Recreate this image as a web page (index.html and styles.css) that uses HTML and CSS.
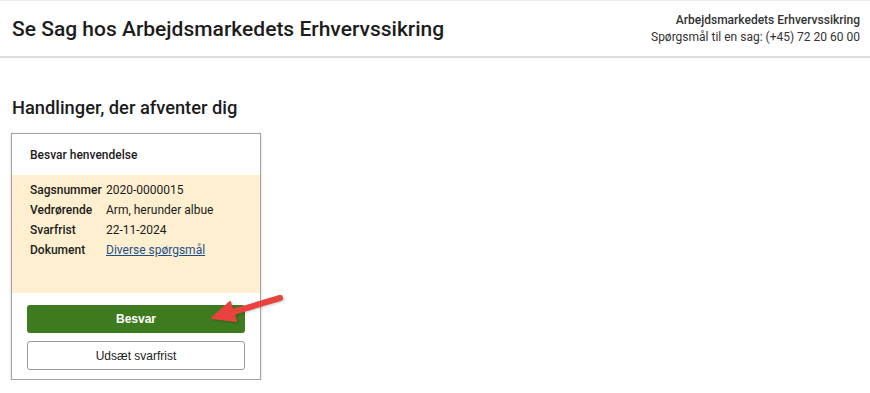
FILE: index.html
```html
<!DOCTYPE html>
<html lang="da">
<head>
  <meta charset="UTF-8" />
  <meta name="viewport" content="width=device-width, initial-scale=1.0" />
  <title>Se Sag hos Arbejdsmarkedets Erhvervssikring</title>
  <link rel="stylesheet" href="styles.css">
</head>
<body>
  <header class="topbar">
    <h1>Se Sag hos Arbejdsmarkedets Erhvervssikring</h1>
    <div class="contact">
      <strong>Arbejdsmarkedets Erhvervssikring</strong>
      <span>Spørgsmål til en sag: (+45) 72 20 60 00</span>
    </div>
  </header>

  <main class="content">
    <h2>Handlinger, der afventer dig</h2>

    <div class="task-wrap">
      <div class="task-card">
        <div class="task-head">Besvar henvendelse</div>
        <dl class="task-details">
          <dt>Sagsnummer</dt><dd>2020-0000015</dd>
          <dt>Vedrørende</dt><dd>Arm, herunder albue</dd>
          <dt>Svarfrist</dt><dd>22-11-2024</dd>
          <dt>Dokument</dt><dd><a href="#">Diverse spørgsmål</a></dd>
        </dl>
        <div class="task-actions">
          <button class="btn btn-primary">Besvar</button>
          <button class="btn btn-secondary">Udsæt svarfrist</button>
        </div>
      </div>

      <!-- markering -->
      <svg class="arrow" width="90" height="45" viewBox="0 0 90 45">
        <line x1="33" y1="26" x2="80" y2="12" stroke="#e8433f" stroke-width="6" stroke-linecap="round" />
        <polygon points="12,32 30,16 36,35" fill="#e8433f" stroke="#e8433f" stroke-width="2" stroke-linejoin="round" />
      </svg>
    </div>
  </main>
</body>
</html>
```

FILE: styles.css
```css
body {
  font-family: Roboto, "Noto Sans", sans-serif;
  margin: 0;
  padding: 0;
  background-color: #fff;
  color: #1c1c1c;
}
.topbar {
  display: flex;
  justify-content: space-between;
  align-items: center;
  height: 55px;
  padding: 0 10px 0 12px;
  border-top: 1px solid #ececec;
  border-bottom: 2px solid #dcdcdc;
}
.topbar h1 {
  margin: 0;
  font-size: 21px;
  font-weight: 500;
}
.contact {
  display: flex;
  flex-direction: column;
  align-items: flex-end;
  font-size: 12px;
  line-height: 17px;
  color: #333;
}
.contact strong {
  font-weight: 500;
}
.content {
  padding: 0 11px;
}
.content h2 {
  margin: 39px 0 15px 1px;
  font-size: 18.3px;
  font-weight: 500;
}
.task-wrap {
  position: relative;
  width: 250px;
}
.task-card {
  border: 1px solid #a3a3a3;
  box-shadow: 0 1px 3px rgba(0, 0, 0, 0.18);
  background: #fff;
}
.task-head {
  height: 41px;
  display: flex;
  align-items: center;
  padding: 0 18px;
  font-size: 12px;
  font-weight: 500;
}
.task-details {
  display: grid;
  grid-template-columns: 76px 1fr;
  grid-auto-rows: 20px;
  align-items: center;
  margin: 0;
  padding: 5px 18px 33px;
  background-color: #fdefcf;
  font-size: 12px;
}
.task-details dt {
  font-weight: 500;
}
.task-details dd {
  margin: 0;
}
.task-details a {
  color: #1f4f8a;
}
.task-actions {
  display: flex;
  flex-direction: column;
  gap: 8px;
  padding: 12px 15px 9px;
}
.btn {
  font-family: "Liberation Sans", Arial, sans-serif;
  font-size: 12px;
  border-radius: 3px;
  cursor: pointer;
}
.btn-primary {
  height: 28px;
  background-color: #3e7b1f;
  color: #fff;
  border: none;
  font-weight: bold;
}
.btn-secondary {
  height: 29px;
  background-color: #fff;
  color: #222;
  border: 1px solid #9a9a9a;
}
.arrow {
  position: absolute;
  left: 189px;
  top: 153px;
  filter: drop-shadow(1px 1px 1px rgba(0, 0, 0, 0.2));
}
```
